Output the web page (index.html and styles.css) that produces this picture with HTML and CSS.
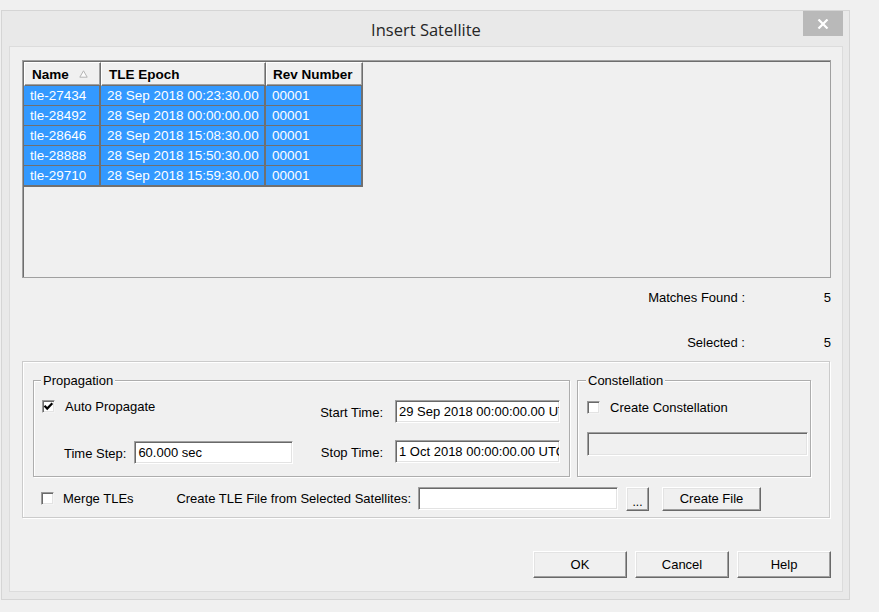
FILE: index.html
```html
<!DOCTYPE html>
<html>
<head>
<meta charset="utf-8">
<title>Insert Satellite</title>
<link rel="stylesheet" href="styles.css">
</head>
<body>
<div class="page">
  <div class="window">
    <div class="titlebar">
      <div></div>
      <div class="title">Insert Satellite</div>
      <div class="close"><svg width="12" height="10" viewBox="0 0 12 10"><path d="M1.5 0.5 L10.5 9.5 M10.5 0.5 L1.5 9.5" stroke="#fff" stroke-width="2.2"/></svg></div>
    </div>
    <div class="content">
      <div class="list">
        <div class="thead">
          <div class="th th-name">Name<svg class="sort" width="9" height="8" viewBox="0 0 9 8"><path d="M4.5 0.8 L0.8 7.2 L8.2 7.2 Z" fill="#fbfbfb" stroke="#b4b4b4" stroke-width="1"/></svg></div>
          <div class="th th-epoch">TLE Epoch</div>
          <div class="th th-rev">Rev Number</div>
        </div>
        <div class="tbody">
          <div class="td">tle-27434</div><div class="td">28 Sep 2018 00:23:30.00</div><div class="td">00001</div>
          <div class="td">tle-28492</div><div class="td">28 Sep 2018 00:00:00.00</div><div class="td">00001</div>
          <div class="td">tle-28646</div><div class="td">28 Sep 2018 15:08:30.00</div><div class="td">00001</div>
          <div class="td">tle-28888</div><div class="td">28 Sep 2018 15:50:30.00</div><div class="td">00001</div>
          <div class="td">tle-29710</div><div class="td">28 Sep 2018 15:59:30.00</div><div class="td">00001</div>
        </div>
      </div>

      <div class="stats">
        <div class="stat-label">Matches Found :</div><div class="stat-value">5</div>
        <div class="stat-label">Selected :</div><div class="stat-value">5</div>
      </div>

      <div class="outer">
        <div class="groups">
          <div class="group prop">
            <span class="legend">Propagation</span>
            <div class="prop-grid">
              <label class="check-label row1-left"><span class="checkbox"><svg width="11" height="11" viewBox="0 0 11 11"><path d="M1.5 4.8 L4.2 7.6 L9.3 2.3" fill="none" stroke="#000" stroke-width="2.2"/></svg></span>Auto Propagate</label>
              <div class="field-label">Start Time:</div>
              <div class="input wide">29 Sep 2018 00:00:00.00 UTCG</div>
              <div class="step">
                <span class="step-label">Time Step:</span>
                <div class="input step-input">60.000 sec</div>
              </div>
              <div class="field-label">Stop Time:</div>
              <div class="input wide">1 Oct 2018 00:00:00.00 UTCG</div>
            </div>
          </div>
          <div class="group const">
            <span class="legend">Constellation</span>
            <label class="check-label const-check"><span class="checkbox"></span>Create Constellation</label>
            <div class="input disabled"></div>
          </div>
        </div>
        <div class="file-row">
          <label class="check-label merge"><span class="checkbox"></span>Merge TLEs</label>
          <span class="file-label">Create TLE File from Selected Satellites:</span>
          <div class="input file-input"></div>
          <div class="btn dots">...</div>
          <div class="btn create">Create File</div>
        </div>
      </div>

      <div class="actions">
        <div class="btn action">OK</div>
        <div class="btn action">Cancel</div>
        <div class="btn action">Help</div>
      </div>
    </div>
  </div>
</div>
</body>
</html>
```

FILE: styles.css
```css
* { box-sizing: border-box; }

body {
  margin: 0;
  background: #f0f0f0;
  font-family: "Liberation Sans", Arial, sans-serif;
  font-size: 13px;
  color: #000;
}

.page { padding: 10px 0 0 1px; }

.window {
  width: 849px;
  border: 1px solid #d5d5d5;
  background: #e9e9e9;
  padding: 0 6px 7px 7px;
}

.titlebar {
  display: grid;
  grid-template-columns: 1fr auto 1fr;
  height: 35px;
}

.title {
  font-family: "Open Sans", "Noto Sans", sans-serif;
  font-size: 16.5px;
  color: #262626;
  align-self: center;
  padding-top: 2px;
}

.close {
  justify-self: end;
  width: 40px;
  height: 25px;
  background: #b9b9b9;
  display: flex;
  align-items: center;
  justify-content: center;
}

.content {
  background: #f0f0f0;
  border: 1px solid #dcdcdc;
  padding: 13px 11px 13px 12px;
  display: flex;
  flex-direction: column;
}

/* list */
.list {
  height: 218px;
  border: 1px solid #a0a0a0;
  box-shadow: inset 1px 1px 0 #6e6e6e;
  padding: 1px 0 0 1px;
}

.thead { display: flex; }

.th {
  height: 24px;
  background: #f0f0f0;
  border: 1px solid;
  border-color: #fff #6e6e6e #6e6e6e #fff;
  box-shadow: inset -1px -1px 0 #a0a0a0;
  font-weight: bold;
  font-size: 13.5px;
  line-height: 21px;
  padding-left: 7px;
  white-space: nowrap;
  display: flex;
  align-items: center;
}
.th-name { width: 77px; }
.th-epoch { width: 165px; }
.th-rev { width: 97px; padding-left: 6px; }
.sort { margin-left: 10px; }

.tbody {
  display: grid;
  grid-template-columns: 75px 163px 95px;
  column-gap: 2px;
  row-gap: 1px;
  width: max-content;
  background: #707070;
  padding: 0 2px 2px 0;
}

.td {
  height: 19px;
  line-height: 19px;
  background: #3399ff;
  color: #fff;
  font-size: 13.5px;
  padding-left: 6px;
  white-space: nowrap;
}

/* stats */
.stats {
  display: grid;
  grid-template-columns: auto 86px;
  grid-auto-rows: 15px;
  row-gap: 30px;
  justify-content: end;
  margin-top: 12px;
  line-height: 15px;
}
.stat-label { text-align: right; }
.stat-value { text-align: right; }

/* group boxes */
.outer {
  margin: 11px 1px 0 0;
  border: 1px solid #cbcbcb;
  box-shadow: inset 1px 1px 0 #fff, 1px 1px 0 #fff;
  padding: 18px 0 6px 10px;
}

.groups { display: flex; gap: 7px; }

.group {
  height: 97px;
  border: 1px solid #adadad;
  box-shadow: inset 1px 1px 0 #fff, 1px 1px 0 #fff;
}

.legend {
  display: block;
  width: max-content;
  background: #f0f0f0;
  padding: 0 2px;
  line-height: 15px;
  margin: -8px 0 12px -1px;
}

.prop { width: 537px; padding: 0 9px 0 8px; }
.const { width: 234px; padding: 0 2px 0 9px; }
.const-check { margin-top: 1px; }

.prop-grid {
  display: grid;
  grid-template-columns: 1fr auto auto;
  grid-template-rows: 23px 23px;
  column-gap: 12px;
  row-gap: 17px;
  margin-top: 1px;
}

.row1-left { align-self: start; margin-top: -1px; }

.field-label { align-self: center; text-align: right; padding-top: 1px; }

.check-label {
  display: flex;
  align-items: center;
  gap: 10px;
  line-height: 15px;
  white-space: nowrap;
}

.checkbox {
  width: 13px;
  height: 13px;
  flex: none;
  background: #fff;
  border: 1px solid;
  border-color: #9a9a9a #f4f4f4 #f4f4f4 #9a9a9a;
  box-shadow: inset 1px 1px 0 #6a6a6a, inset -1px -1px 0 #e3e3e3;
  display: flex;
}
.checkbox svg { display: block; }

.input {
  height: 23px;
  background: #fff;
  border: 1px solid;
  border-color: #a0a0a0 #fff #fff #a0a0a0;
  box-shadow: inset 1px 1px 0 #696969, inset -1px -1px 0 #e3e3e3;
  padding: 0 0 0 3px;
  line-height: 21px;
  white-space: nowrap;
  overflow: hidden;
}
.wide { width: 165px; }

.step {
  display: flex;
  align-items: center;
  padding-left: 22px;
  gap: 8px;
  margin-top: 1px;
}
.step-label { padding-top: 2px; }
.step-input { width: 159px; }

.disabled {
  width: 221px;
  height: 24px;
  background: #f0f0f0;
  margin-top: 17px;
}

/* file row */
.file-row {
  display: flex;
  align-items: center;
  height: 25px;
  margin-top: 9px;
}
.merge { width: 135px; margin-left: 8px; gap: 9px; }
.file-label { width: 235px; text-align: right; margin-right: 7px; white-space: nowrap; }
.file-input { width: 200px; height: 23px; }

.btn {
  background: #f0f0f0;
  border: 1px solid;
  border-color: #fff #696969 #696969 #fff;
  box-shadow: inset -1px -1px 0 #a0a0a0, inset 1px 1px 0 #e3e3e3;
  display: flex;
  align-items: center;
  justify-content: center;
  white-space: nowrap;
}
.dots { width: 23px; height: 24px; margin-left: 8px; padding-top: 6px; font-size: 12px; }
.create { width: 99px; height: 24px; margin-left: 13px; }

/* dialog buttons */
.actions {
  display: flex;
  justify-content: flex-end;
  gap: 8px;
  margin-top: 33px;
}
.action { width: 94px; height: 27px; }
```
